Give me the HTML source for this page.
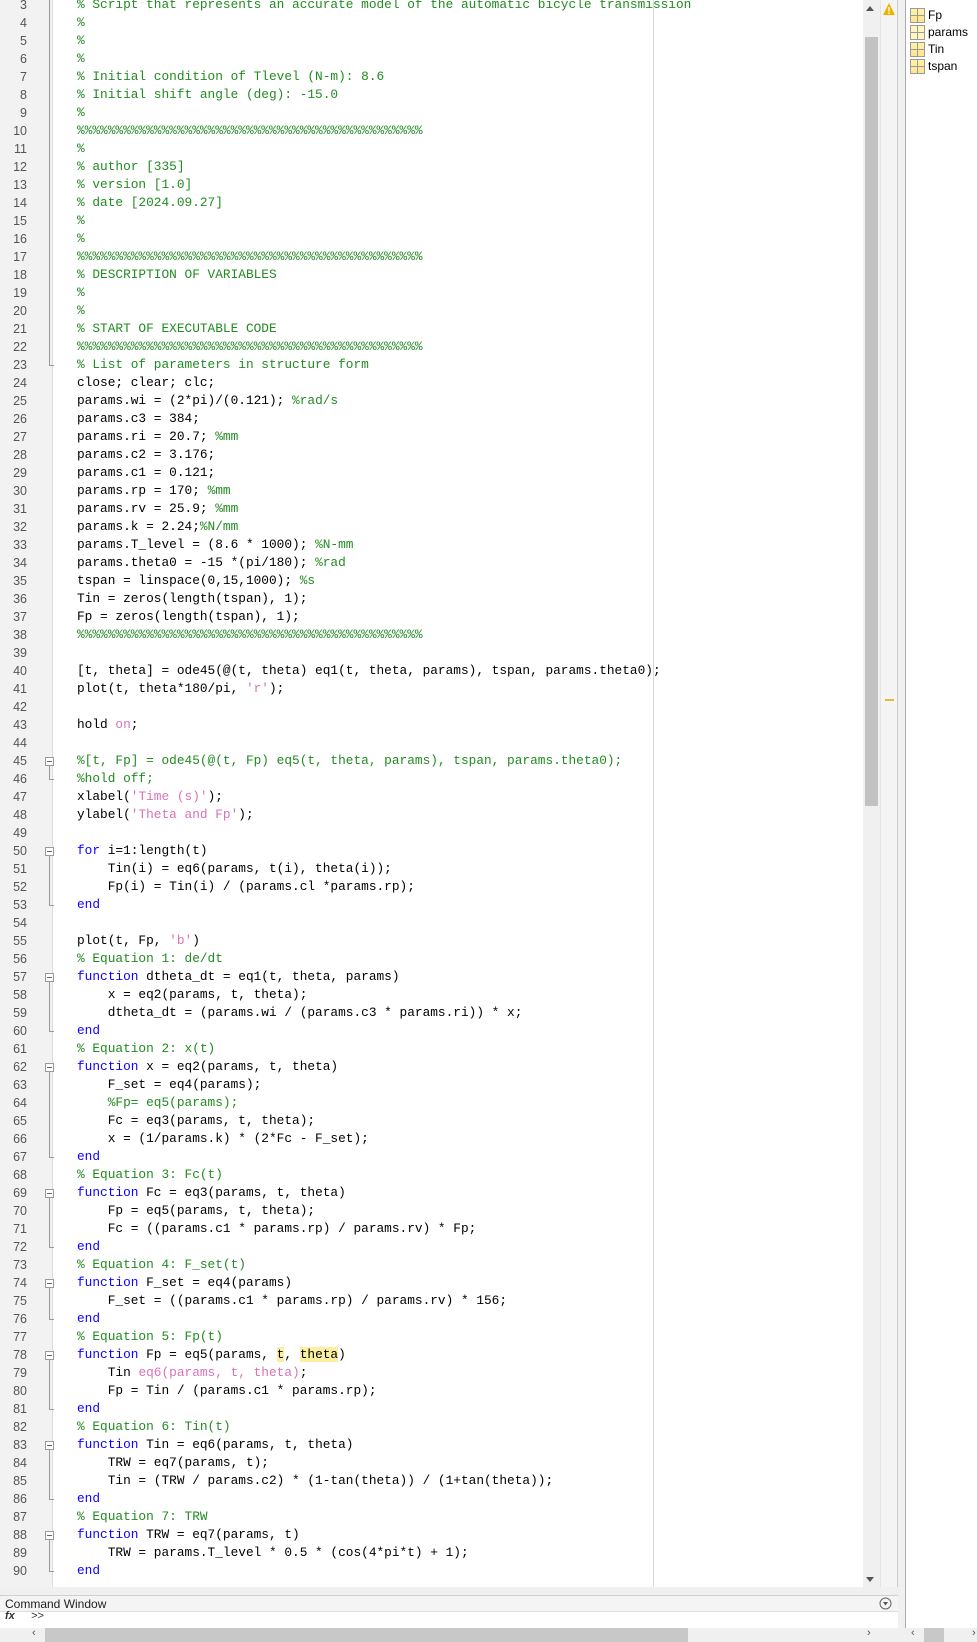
<!DOCTYPE html>
<html><head><meta charset="utf-8">
<style>
*{margin:0;padding:0;box-sizing:border-box}
body{width:977px;height:1642px;overflow:hidden;background:#f0f0f0;font-family:"Liberation Sans",sans-serif;position:relative}
#ed{position:absolute;left:0;top:0;width:898px;height:1587px;background:#fff;overflow:hidden;border-right:1px solid #ccc}
#gut{position:absolute;left:0;top:0;width:53px;height:1587px;background:#f2f2f2;border-right:1px solid #ddd}
.n{position:absolute;left:0;width:27px;text-align:right;font-size:12.5px;color:#555;height:18px;line-height:18px}
.l{position:absolute;left:77px;font-family:"Liberation Mono",monospace;font-size:12.8px;line-height:18px;height:18px;white-space:pre;color:#000}
.c{color:#228B22}.k{color:#0e00ff}.s{color:#d872b8}.h{background:#fcefa0}
.fb{position:absolute;left:45px;width:9px;height:9px;border:1px solid #999;background:#fff}
.fb:after{content:"";position:absolute;left:1px;top:3px;width:5px;height:1px;background:#666}
.fv{position:absolute;left:49px;width:1px;background:#999}
.fe{position:absolute;left:49px;width:5px;height:1px;background:#999}
#margin{position:absolute;left:653px;top:0;width:1px;height:1587px;background:#d8d8d8}
#vs{position:absolute;left:863px;top:0;width:17px;height:1587px;background:#f0f0f0}
#thumb{position:absolute;left:865px;top:37px;width:13px;height:769px;background:#c2c2c2}
#ann{position:absolute;left:880px;top:0;width:18px;height:1587px;background:#f4f4f4;border-left:1px solid #e4e4e4}
#ws{position:absolute;left:905px;top:0;width:72px;height:1628px;background:#fff;border-left:1px solid #aaa}
.wi{position:absolute;left:4px;font-size:12px;height:17px;line-height:17px;padding-left:18px}
.wi i{position:absolute;left:0;top:1px;width:15px;height:15px;border:1px solid #9a9a9a;background:linear-gradient(#fff3a8,#fde68a)}
.wi i:before{content:"";position:absolute;left:6px;top:0;width:1px;height:13px;background:#9a9a9a}
.wi i:after{content:"";position:absolute;left:0;top:6px;width:13px;height:1px;background:#9a9a9a}
</style></head><body>
<div id="ed">
<div id="gut"></div>
<div id="margin"></div>
<div id="lines"></div>
<div id="vs"></div><div id="thumb"></div>
<div style="position:absolute;left:866px;top:6px;width:0;height:0;border-left:4px solid transparent;border-right:4px solid transparent;border-bottom:5px solid #555"></div>
<div style="position:absolute;left:866px;top:1577px;width:0;height:0;border-left:4px solid transparent;border-right:4px solid transparent;border-top:5px solid #555"></div>
<div id="ann"></div>
<svg style="position:absolute;left:882px;top:2px" width="14" height="14"><path d="M7 1 L13 13 L1 13 Z" fill="#f0b400"/><rect x="6.3" y="5" width="1.4" height="4.5" fill="#fff"/><rect x="6.3" y="10.5" width="1.4" height="1.4" fill="#fff"/></svg>
<div style="position:absolute;left:885px;top:699px;width:9px;height:2px;background:#e8b838"></div>
</div>
<div id="ws">
<div class="wi" style="top:7px"><i></i>Fp</div>
<div class="wi" style="top:24px"><i style="background:#fff6c0"></i>params</div>
<div class="wi" style="top:41px"><i></i>Tin</div>
<div class="wi" style="top:58px"><i></i>tspan</div>
</div>
<div style="position:absolute;left:0;top:1595px;width:898px;height:17px;background:#f4f4f4;border-top:1px solid #d0d0d0;border-bottom:1px solid #ddd;font-size:12px;line-height:16px;padding-left:5px;color:#222">Command Window</div>
<svg style="position:absolute;left:879px;top:1597px" width="13" height="13"><circle cx="6.5" cy="6.5" r="5.5" fill="none" stroke="#666"/><path d="M4 5 L9 5 L6.5 8.5Z" fill="#555"/></svg>
<div style="position:absolute;left:0;top:1612px;width:898px;height:16px;background:#fff"></div>
<div style="position:absolute;left:5px;top:1610px;font-size:11px;font-style:italic;font-weight:bold;color:#333">fx</div>
<div style="position:absolute;left:31px;top:1610px;font-size:11px;font-style:italic;color:#333">&gt;&gt;</div>
<div style="position:absolute;left:0;top:1628px;width:898px;height:14px;background:#f0f0f0"></div>
<div style="position:absolute;left:45px;top:1628px;width:643px;height:14px;background:#c8c8c8"></div>
<div style="position:absolute;left:32px;top:1627px;font-size:11px;color:#555">&lsaquo;</div>
<div style="position:absolute;left:867px;top:1627px;font-size:11px;color:#555">&rsaquo;</div>
<div style="position:absolute;left:906px;top:1628px;width:71px;height:14px;background:#f0f0f0"></div>
<div style="position:absolute;left:924px;top:1628px;width:20px;height:14px;background:#c8c8c8"></div>
<div style="position:absolute;left:911px;top:1627px;font-size:11px;color:#555">&lsaquo;</div>
<div style="position:absolute;left:972px;top:1627px;font-size:11px;color:#555">&rsaquo;</div>
<script>
var P='%%%%%%%%%%%%%%%%%%%%%%%%%%%%%%%%%%%%%%%%%%%%%';
function C(t){return '<span class="c">'+t+'</span>'}
function K(t){return '<span class="k">'+t+'</span>'}
function S(t){return '<span class="s">'+t+'</span>'}
var L={
3:C('% Script that represents an accurate model of the automatic bicycle transmission'),
4:C('%'),5:C('%'),6:C('%'),
7:C('% Initial condition of Tlevel (N-m): 8.6'),
8:C('% Initial shift angle (deg): -15.0'),
9:C('%'),10:C(P),11:C('%'),
12:C('% author [335]'),13:C('% version [1.0]'),14:C('% date [2024.09.27]'),
15:C('%'),16:C('%'),17:C(P),18:C('% DESCRIPTION OF VARIABLES'),19:C('%'),20:C('%'),
21:C('% START OF EXECUTABLE CODE'),22:C(P),23:C('% List of parameters in structure form'),
24:'close; clear; clc;',
25:'params.wi = (2*pi)/(0.121); '+C('%rad/s'),
26:'params.c3 = 384;',
27:'params.ri = 20.7; '+C('%mm'),
28:'params.c2 = 3.176;',
29:'params.c1 = 0.121;',
30:'params.rp = 170; '+C('%mm'),
31:'params.rv = 25.9; '+C('%mm'),
32:'params.k = 2.24;'+C('%N/mm'),
33:'params.T_level = (8.6 * 1000); '+C('%N-mm'),
34:'params.theta0 = -15 *(pi/180); '+C('%rad'),
35:'tspan = linspace(0,15,1000); '+C('%s'),
36:'Tin = zeros(length(tspan), 1);',
37:'Fp = zeros(length(tspan), 1);',
38:C(P),
40:'[t, theta] = ode45(@(t, theta) eq1(t, theta, params), tspan, params.theta0);',
41:"plot(t, theta*180/pi, "+S("'r'")+");",
43:'hold '+S('on')+';',
45:C('%[t, Fp] = ode45(@(t, Fp) eq5(t, theta, params), tspan, params.theta0);'),
46:C('%hold off;'),
47:"xlabel("+S("'Time (s)'")+");",
48:"ylabel("+S("'Theta and Fp'")+");",
50:K('for')+' i=1:length(t)',
51:'    Tin(i) = eq6(params, t(i), theta(i));',
52:'    Fp(i) = Tin(i) / (params.cl *params.rp);',
53:K('end'),
55:"plot(t, Fp, "+S("'b'")+")",
56:C('% Equation 1: de/dt'),
57:K('function')+' dtheta_dt = eq1(t, theta, params)',
58:'    x = eq2(params, t, theta);',
59:'    dtheta_dt = (params.wi / (params.c3 * params.ri)) * x;',
60:K('end'),
61:C('% Equation 2: x(t)'),
62:K('function')+' x = eq2(params, t, theta)',
63:'    F_set = eq4(params);',
64:'    '+C('%Fp= eq5(params);'),
65:'    Fc = eq3(params, t, theta);',
66:'    x = (1/params.k) * (2*Fc - F_set);',
67:K('end'),
68:C('% Equation 3: Fc(t)'),
69:K('function')+' Fc = eq3(params, t, theta)',
70:'    Fp = eq5(params, t, theta);',
71:'    Fc = ((params.c1 * params.rp) / params.rv) * Fp;',
72:K('end'),
73:C('% Equation 4: F_set(t)'),
74:K('function')+' F_set = eq4(params)',
75:'    F_set = ((params.c1 * params.rp) / params.rv) * 156;',
76:K('end'),
77:C('% Equation 5: Fp(t)'),
78:K('function')+' Fp = eq5(params, <span class="h">t</span>, <span class="h">theta</span>)',
79:'    Tin '+S('eq6(params, t, theta)')+';',
80:'    Fp = Tin / (params.c1 * params.rp);',
81:K('end'),
82:C('% Equation 6: Tin(t)'),
83:K('function')+' Tin = eq6(params, t, theta)',
84:'    TRW = eq7(params, t);',
85:'    Tin = (TRW / params.c2) * (1-tan(theta)) / (1+tan(theta));',
86:K('end'),
87:C('% Equation 7: TRW'),
88:K('function')+' TRW = eq7(params, t)',
89:'    TRW = params.T_level * 0.5 * (cos(4*pi*t) + 1);',
90:K('end')
};
var h='';
function T(n){return 14+(n-4)*18}
for(var n=3;n<=90;n++){
 h+='<div class="n" style="top:'+T(n)+'px">'+n+'</div>';
 if(L[n])h+='<div class="l" style="top:'+T(n)+'px">'+L[n]+'</div>';
}
var F=[[45,46],[50,53],[57,60],[62,67],[69,72],[74,76],[78,81],[83,86],[88,90]];
h+='<div class="fv" style="top:0;height:'+(T(23)+9)+'px"></div><div class="fe" style="top:'+(T(23)+9)+'px"></div>';
F.forEach(function(f){
 var a=T(f[0])+9,b=T(f[1])+9;
 h+='<div class="fv" style="top:'+(a+4)+'px;height:'+(b-a-4)+'px"></div><div class="fe" style="top:'+b+'px"></div><div class="fb" style="top:'+(a-4)+'px"></div>';
});
document.getElementById('lines').innerHTML=h;
</script>
</body></html>
